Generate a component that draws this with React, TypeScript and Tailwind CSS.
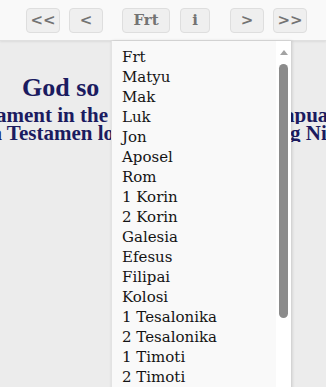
import React from "react";

const books = [
  "Frt", "Matyu", "Mak", "Luk", "Jon", "Aposel", "Rom", "1 Korin", "2 Korin", "Galesia",
  "Efesus", "Filipai", "Kolosi", "1 Tesalonika", "2 Tesalonika", "1 Timoti", "2 Timoti", "Taitus",
];

function Btn({ label, cls }: { label: string; cls: string }) {
  return (
    <div
      className={`${cls} h-[25px] shrink-0 flex items-center justify-center rounded-[4px] border border-[#dedede] bg-[#efefef] text-[#737373] font-bold text-[15px] leading-none`}
    >
      {label}
    </div>
  );
}

export default function App() {
  return (
    <div className="relative w-[326px] h-[387px] overflow-hidden bg-[#ececec] font-['DejaVu_Serif',serif]">
      {/* toolbar */}
      <div className="h-[41px] bg-[#f9f9f9] border-b border-[#e0e0e0] shadow-[0_1px_2px_rgba(0,0,0,0.07)] flex items-center">
        <Btn label="<<" cls="w-[34px] ml-[26px]" />
        <Btn label="<" cls="w-[34px] ml-[9px]" />
        <Btn label="Frt" cls="w-[48px] ml-[19px]" />
        <Btn label="i" cls="w-[30px] ml-[10px]" />
        <Btn label=">" cls="w-[34px] ml-[20px]" />
        <Btn label=">>" cls="w-[34px] ml-[9px]" />
      </div>

      {/* title block, centred, wider than the window */}
      <div className="w-[316px] flex flex-col text-[#1b1b60] font-bold font-['Liberation_Serif',serif] mt-[32px]">
        <div className="flex justify-center text-[26px] leading-[30px] whitespace-nowrap">
          <div className="w-[80px] shrink-0 overflow-hidden">God so</div>
          <div className="w-[192px] shrink-0 overflow-hidden pl-[16px]">loved the world</div>
        </div>
        <div className="flex justify-center text-[21px] leading-[18px] whitespace-nowrap mt-[3px]">
          <div className="w-[148px] shrink-0 overflow-hidden flex justify-end">
            <span className="shrink-0">New Testament in the</span>
          </div>
          <div className="w-[176px] shrink-0 overflow-hidden pl-[6px]">Tok Pisin language of P</div>
          <div className="w-[72px] shrink-0 overflow-hidden">apua New Guinea</div>
        </div>
        <div className="flex justify-center text-[21px] leading-[18px] whitespace-nowrap">
          <div className="w-[174px] shrink-0 overflow-hidden flex justify-end">
            <span className="shrink-0">Nupela Testamen lo</span>
          </div>
          <div className="w-[176px] shrink-0 overflow-hidden">ng Tok Pisin long Papua Niu Gini lon</div>
          <div className="w-[86px] shrink-0 overflow-hidden">g Niugini</div>
        </div>
      </div>

      {/* book dropdown list */}
      <div className="absolute left-[111px] top-[41px] w-[180px] h-[360px] flex bg-[#f9f9f9] border-l border-[#e3e3e3] shadow-[1px_0_3px_rgba(0,0,0,0.16)]">
        <div className="flex-1 pt-[6px] pl-[10px] text-[15px] leading-[20px] text-[#141414]">
          {books.map((b) => (
            <div key={b} className="h-[20px] whitespace-nowrap">{b}</div>
          ))}
        </div>
        <div className="w-[15px] bg-white flex flex-col items-center pt-[9px]">
          <svg width="8" height="5" viewBox="0 0 8 5">
            <polygon points="4,0 8,5 0,5" fill="#a3a3a3" />
          </svg>
          <div className="mt-[9px] w-[9px] h-[254px] rounded-full bg-[#8b8b8b]" />
        </div>
      </div>
    </div>
  );
}
